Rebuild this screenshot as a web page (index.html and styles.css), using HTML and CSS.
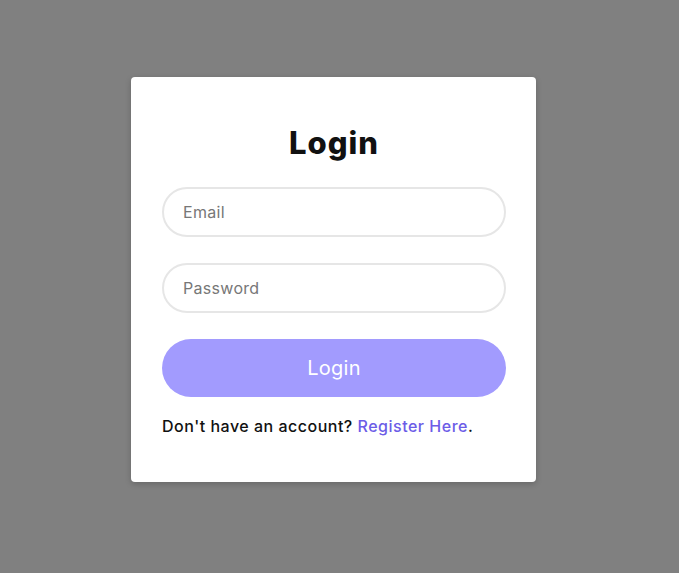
FILE: index.html
```html
<!DOCTYPE html>
<html lang="en">
<head>
  <meta charset="UTF-8">
  <meta name="viewport" content="width=device-width, initial-scale=1.0">
  <title>Login</title>
  <link rel="stylesheet" href="styles.css">
</head>
<body>
  <div class="login-box">
    <h1>Login</h1>
    <form class="login-form">
      <input type="email" placeholder="Email" />
      <input type="password" placeholder="Password" />
      <button type="submit">Login</button>
    </form>
    <p class="register">Don't have an account? <a href="#">Register Here</a>.</p>
  </div>
</body>
</html>
```

FILE: styles.css
```css
* {
  box-sizing: border-box;
}
body {
  font-family: Inter, "Noto Sans", sans-serif;
  display: flex;
  justify-content: center;
  align-items: center;
  min-height: 100vh;
  margin: 0;
  padding: 0 12px 14px 0;
  background-color: #808080;
}
.login-box {
  width: 405px;
  padding: 46px 30px 46px 31px;
  background-color: #fff;
  border-radius: 4px;
  box-shadow: 0 2px 6px rgba(0, 0, 0, 0.2);
}
h1 {
  margin: 0 0 24px;
  font-size: 31px;
  font-weight: 800;
  line-height: 40px;
  letter-spacing: 1px;
  text-align: center;
  color: #111;
}
.login-form {
  display: flex;
  flex-direction: column;
  gap: 26px;
}
input {
  width: 100%;
  height: 50px;
  padding: 0 19px;
  border: 2px solid #e6e6e6;
  border-radius: 25px;
  font-family: inherit;
  font-size: 16px;
  letter-spacing: 0.3px;
  color: #333;
}
input::placeholder {
  color: #777;
}
input:focus {
  outline: none;
  border-color: #a29bfe;
}
button {
  width: 100%;
  height: 58px;
  border: none;
  border-radius: 29px;
  background-color: #a29bfe;
  color: #fff;
  font-family: inherit;
  font-size: 20px;
  letter-spacing: 0.3px;
  cursor: pointer;
}
.register {
  margin: 19px 0 0;
  font-size: 16px;
  font-weight: 500;
  letter-spacing: 0.5px;
  color: #111;
}
.register a {
  color: #6c5ce7;
  text-decoration: none;
}
```
